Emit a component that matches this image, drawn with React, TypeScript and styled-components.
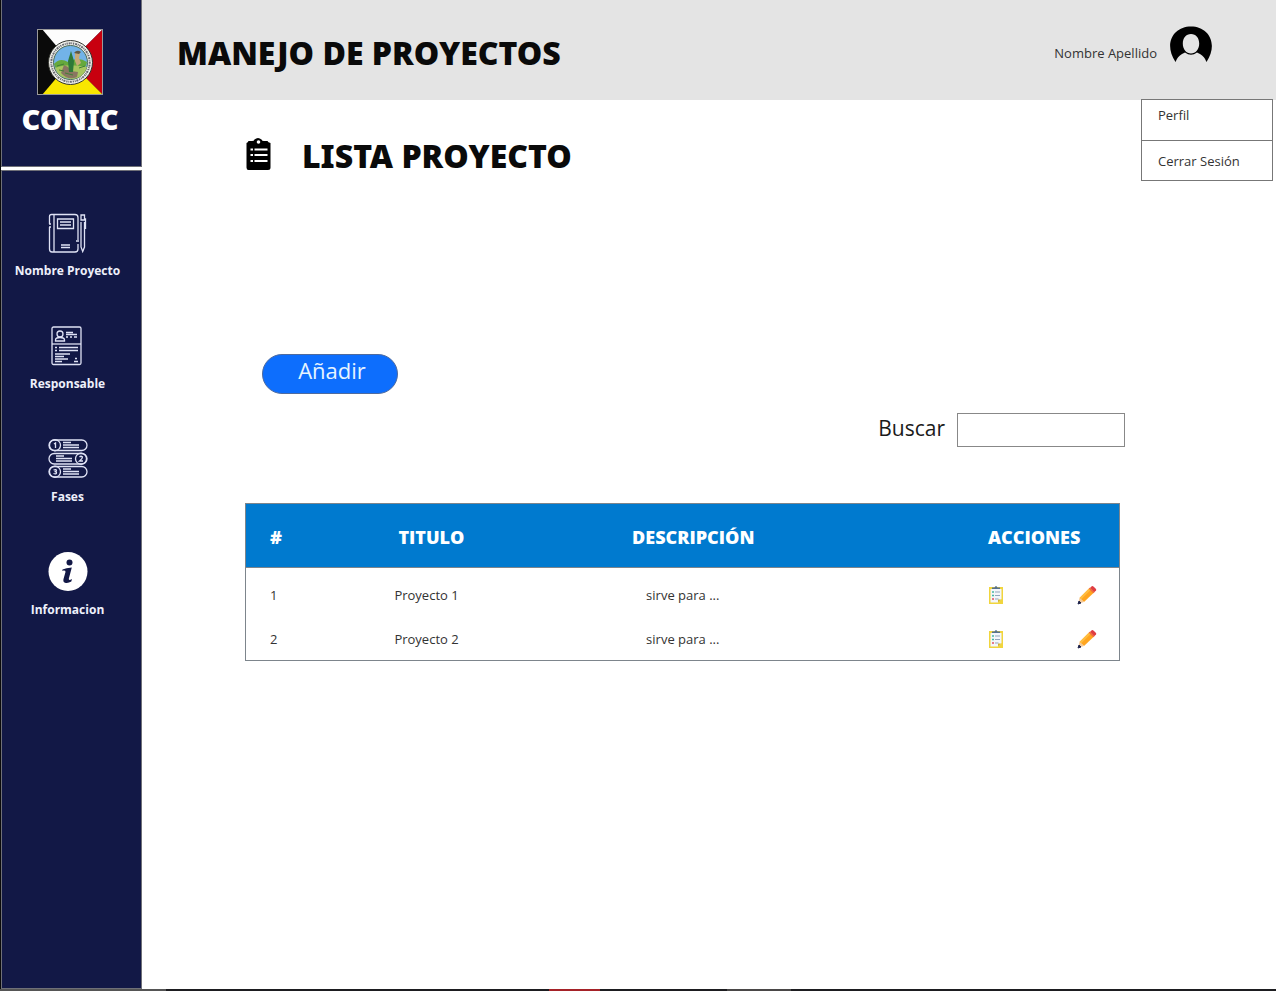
import React from "react";
import styled, { createGlobalStyle } from "styled-components";

const GlobalStyle = createGlobalStyle`
  *, *::before, *::after { box-sizing: border-box; }
  body {
    margin: 0;
    background: #fff;
    color: #333;
    font-family: "Open Sans", "Noto Sans", sans-serif;
    font-size: 13px;
    line-height: 18px;
  }
  h1, h2, p, ul { margin: 0; padding: 0; }
  a { color: inherit; text-decoration: none; }
`;

const displayFont = `"Noto Sans", "Open Sans", sans-serif`;

const Page = styled.div`
  display: grid;
  grid-template-columns: 142px 1fr;
  grid-template-rows: 1fr 2px;
  min-height: 100vh;
`;

const Sidebar = styled.aside`
  display: flex;
  flex-direction: column;
  gap: 3px;
  border-left: 1px solid #0a0a0a;
`;

const SidePanel = styled.div`
  background: #121846;
  border: 1px solid #6f7078;
`;

const Brand = styled(SidePanel)`
  display: flex;
  flex-direction: column;
  align-items: center;
  gap: 8px;
  height: 167px;
  padding: 29px 3px 0 0;
  border-top: 0;
`;

const BrandName = styled.p`
  color: #fff;
  font-family: ${displayFont};
  font-size: 29px;
  font-weight: 900;
  line-height: 32px;
`;

const NavPanel = styled(SidePanel)`
  flex: 1;
  padding: 42px 8px 40px 0;
`;

const NavList = styled.ul`
  display: flex;
  flex-direction: column;
  gap: 46px;
  list-style: none;
`;

const NavLink = styled.a`
  display: flex;
  flex-direction: column;
  align-items: center;
  gap: 9px;
  color: #eef0fb;
  font-size: 12px;
  font-weight: 700;
  white-space: nowrap;
`;

const Content = styled.div`
  display: flex;
  flex-direction: column;
  min-width: 0;
`;

const Header = styled.header`
  position: relative;
  display: flex;
  justify-content: space-between;
  height: 100px;
  padding: 26px 64px 0 35px;
  background: #e4e4e4;
`;

const Title = styled.h1`
  color: #0a0a0a;
  font-family: ${displayFont};
  font-size: 32px;
  font-weight: 900;
  line-height: 54px;
`;

const Subtitle = styled.h2`
  color: #0a0a0a;
  font-family: ${displayFont};
  font-size: 32px;
  font-weight: 900;
  line-height: 36px;
`;

const User = styled.div`
  display: flex;
  gap: 13px;
  height: 54px;
  line-height: 54px;
`;

const UserMenu = styled.nav`
  position: absolute;
  top: 99px;
  right: 3px;
  width: 132px;
  background: #fff;
  border: 1px solid #777;
`;

const MenuLink = styled.a`
  display: block;
  height: 40px;
  padding: 6px 16px;
  & + & {
    padding-top: 11px;
    border-top: 1px solid #777;
  }
`;

const Main = styled.main`
  display: flex;
  flex-direction: column;
  align-items: flex-start;
  padding: 38px 151px 60px 103px;
`;

const Heading = styled.div`
  display: flex;
  gap: 30px;
`;

const AddButton = styled.button`
  width: 136px;
  height: 40px;
  margin: 180px 0 0 17px;
  padding: 0 0 8px 4px;
  border: 1px solid #4f6b9e;
  border-radius: 20px;
  background: #0d6efd;
  color: #e6f4ff;
  font: inherit;
  font-size: 22px;
  line-height: 30px;
`;

const Search = styled.div`
  display: flex;
  align-self: flex-end;
  gap: 12px;
  margin-top: 19px;
`;

const SearchLabel = styled.label`
  color: #1a1a1a;
  font-size: 21px;
  line-height: 30px;
`;

const SearchInput = styled.input`
  width: 168px;
  height: 34px;
  padding: 0 8px;
  border: 1px solid #888;
  background: #fff;
  font: inherit;
`;

const TableFrame = styled.div`
  align-self: stretch;
  margin: 56px 5px 0 0;
  border: 1px solid #7d858c;
`;

const Table = styled.table`
  width: 100%;
  table-layout: fixed;
  border-collapse: collapse;
  text-align: left;
`;

const HeadCell = styled.th<{ $width: string; $indent: number }>`
  width: ${(p) => p.$width};
  height: 63px;
  padding: 4px 0 0 ${(p) => p.$indent}px;
  background: #007acf;
  color: #fff;
  font-size: 18px;
  font-weight: 800;
  line-height: 24px;
`;

const TableBody = styled.tbody`
  border-top: 1px solid #7d858c;
`;

const Row = styled.tr`
  height: 43px;
  &:first-child { height: 50px; }
  &:first-child > td { padding-top: 6px; }
`;

const Cell = styled.td<{ $indent: number }>`
  padding: 0 0 0 ${(p) => p.$indent}px;
`;

const Actions = styled.div`
  display: flex;
  justify-content: space-between;
  padding-right: 22px;
`;

const IconButton = styled.button`
  display: flex;
  padding: 0;
  border: 0;
  background: none;
`;

const BottomStrip = styled.footer`
  grid-column: 1 / -1;
  background: linear-gradient(
    90deg,
    #555 0 13%,
    #1d1d20 13% 43%,
    #a52228 43% 47%,
    #1d1d20 47% 57%,
    #4a4848 57% 62%,
    #1d1d20 62%
  );
`;

const Logo = () => (
  <svg width="66" height="66" viewBox="0 0 66 66" role="img" aria-label="CONIC">
    <path d="M0 0H66L33 33Z" fill="#fdfdfd" />
    <path d="M66 0V66L33 33Z" fill="#c8000f" />
    <path d="M0 66H66L33 33Z" fill="#f8e600" />
    <path d="M0 0L5 0L33 33L5 66H0Z" fill="#0a0a0a" />
    <rect x=".5" y=".5" width="65" height="65" fill="none" stroke="#9a9a9a" />
    <circle cx="33.5" cy="33.5" r="22" fill="#f1f1ec" stroke="#33352f" />
    <circle cx="33.5" cy="33.5" r="19.2" fill="none" stroke="#6a6c73" strokeWidth="2" strokeDasharray="1.3 .9 2 .7 .9 .8" />
    <circle cx="33.5" cy="33.5" r="17" fill="#72b3e8" stroke="#4b6a53" />
    <path d="M17 35Q23 28 31 33Q41 27 50 33A17 17 0 0 1 17 35Z" fill="#66a93c" />
    <path d="M18 39Q29 34 50 38Q46 50 34 50Q22 50 18 39Z" fill="#a7c65f" />
    <path d="M24 44L27 36L31 38L34 42L41 43L40 48Q31 52 24 44Z" fill="#8a7661" />
    <path d="M34 22L37 32L36 43H32L31 32Z" fill="#2e7a38" />
    <path d="M38 24L41 22L43 25L42 29L44 34L40 37L38 32Z" fill="#c6aa78" />
    <path d="M37 24Q40 20 44 23L42 25Z" fill="#5e5944" />
    <path d="M20 37l7-2M42 39l6-2M28 44l8 2M22 41l5 1" stroke="#417f36" fill="none" />
  </svg>
);

const NotebookIcon = () => (
  <svg width="40" height="40" viewBox="0 0 40 40" fill="none" stroke="#dfe2f5" strokeWidth="1.3" aria-hidden="true">
    <path d="M1.500 11V3.500Q1.500 1.500 3.500 1.500H27Q30 1.500 30 4.500V27M1.500 14V36Q1.500 39 4 39H27Q30 39 30 36V31M6 1.500V39" />
    <path d="M1 11h2M1 14h2M28 28h3" />
    <path d="M9.500 6H25.500V15.500H9.500ZM12 9H23M12 12H23M13 32H22M13 34.500H22" />
    <path d="M33 2H36.500V7H33ZM33 9V34L34.700 38.500L36.500 34V9M36 6H37.500V16" />
  </svg>
);

const ProfileIcon = () => (
  <svg width="40" height="40" viewBox="0 0 40 40" fill="none" stroke="#dfe2f5" strokeWidth="1.3" aria-hidden="true">
    <rect x="4" y="1" width="29" height="37.500" rx="1.500" />
    <path d="M4 18H33" />
    <circle cx="12" cy="8" r="3" />
    <path d="M7.500 15V14Q7.500 11.500 12 11.500Q16.500 11.500 16.500 14V15Z" />
    <path d="M18 6.500H25M18 8.500H29M18 11H20M22 11H24M26 11H29M7 21.500H9M11 21.500H30M7 24.500H9M11 24.500H30M7 28H22M7 30.500H16M7 33H20M7 35.500H14M27 32.500H29M26 35.500H30" />
  </svg>
);

const PhasesIcon = () => (
  <svg width="40" height="40" viewBox="0 0 40 40" fill="none" stroke="#dfe2f5" strokeWidth="1.3" aria-hidden="true">
    <rect x="1" y="1" width="38" height="10.500" rx="5.250" />
    <rect x="1" y="14.500" width="38" height="10.500" rx="5.250" />
    <rect x="1" y="27.500" width="38" height="10.500" rx="5.250" />
    <circle cx="7" cy="6.250" r="5.500" />
    <circle cx="33" cy="19.750" r="5.500" />
    <circle cx="7" cy="32.750" r="5.500" />
    <path d="M15 3.500H23M15 6H31M15 8.500H31M8 17H16M8 19.500H24M8 22H24M15 30H23M15 32.500H31M15 35H31" />
    <path d="M6 5L7.500 4V9M31.500 18Q33 16.500 34.500 18Q34.500 19.500 31.500 22H35M5.500 31Q8.500 30 8.500 31.500Q8.500 32.500 6.500 32.500Q8.700 32.500 8.500 34Q8 35.500 5.500 34.500" />
  </svg>
);

const InfoIcon = () => (
  <svg width="40" height="40" viewBox="0 0 40 40" aria-hidden="true">
    <circle cx="20" cy="19.500" r="19.500" fill="#fff" />
    <circle cx="21.500" cy="10.500" r="3" fill="#121846" />
    <path d="M14.500 17.500Q18 16 23.800 15.500L20.800 26.800Q20.500 29 24 27L23.300 29.500Q20 31.500 17 30.700Q14.800 30 15.500 27L17.500 20Q17.800 18 14.200 18.800Z" fill="#121846" />
  </svg>
);

const AvatarIcon = () => (
  <svg width="42" height="37" viewBox="0 0 42 37" aria-hidden="true">
    <path fillRule="evenodd" d="M5.500 36C-7 17 4 .5 21 .5S49 17 36.500 36Q34.500 30.500 30 28L27 26.500Q21 31 15 26.500L12 28Q7.500 30.500 5.500 36ZM21 8C16 8 12.800 12 12.800 17.500C12.800 23.500 16.500 27.500 21 27.500C25.500 27.500 29.200 23.500 29.200 17.500C29.200 12 26 8 21 8Z" />
  </svg>
);

const ListIcon = () => (
  <svg width="27" height="34" viewBox="0 0 27 34" aria-hidden="true">
    <path d="M3.500 3H7Q9 3 9.500 1.500Q13 -1.500 16.500 1.500Q17 3 19 3H22.500Q23 4.500 25.500 5V29.500Q25.500 32 23 32H3.500Q1.500 32 1.500 29.500V5Q3 4.500 3.500 3Z" />
    <circle cx="13.500" cy="4" r="1.800" fill="#fff" />
    <path d="M5.500 11.500H8M9.500 11.500H22.500M5.500 17H8M9.500 17H22.500M5.500 23H8M9.500 23H22.500" stroke="#fff" strokeWidth="2" />
  </svg>
);

const ClipboardIcon = () => (
  <svg width="16" height="20" viewBox="0 0 16 20" aria-hidden="true">
    <path d="M1 2H15V19H1Z" fill="#f1d53d" />
    <path d="M2.500 4H13.500V14L10 17.500H2.500Z" fill="#f4f6fa" />
    <path d="M10 17.500V14.500H13Z" fill="#d2b42d" />
    <path d="M4 4V2.500H6.500Q8 -.5 9.500 2.500H12V4Z" fill="#57718d" />
    <path d="M7 7H12M7 10.500H12M7 14H10.500" stroke="#93a5bd" />
    <path d="M4 7H6M4 10.500H6" stroke="#44b6a4" strokeWidth="1.300" />
    <path d="M4 14H6" stroke="#e05262" strokeWidth="1.600" />
  </svg>
);

const PencilIcon = () => (
  <svg width="20" height="20" viewBox="0 0 20 20" aria-hidden="true">
    <path d="M12.500 3L17 7.500L7 17L2.500 13Z" fill="#ffa51f" />
    <path d="M12.500 3L14 4.500L4 14.500L2.500 13Z" fill="#ffbd40" />
    <path d="M2.500 13L7 17L1 19Z" fill="#f3c99a" />
    <path d="M2 16L4 18L1 19Z" fill="#20264e" stroke="#20264e" />
    <path d="M13 3L15 1Q16 .5 19 4Q19.500 5 19 5.500L17 7.500Z" fill="#df3d43" />
    <path d="M11.800 3.800L13 2.500L17.500 7L16.200 8.200Z" fill="#f06b3e" />
  </svg>
);

const navItems = [
  { label: "Nombre Proyecto", icon: <NotebookIcon /> },
  { label: "Responsable", icon: <ProfileIcon /> },
  { label: "Fases", icon: <PhasesIcon /> },
  { label: "Informacion", icon: <InfoIcon /> },
];

const projects = [
  { id: 1, title: "Proyecto 1", description: "sirve para ..." },
  { id: 2, title: "Proyecto 2", description: "sirve para ..." },
];

export default function App() {
  return (
    <>
      <GlobalStyle />
      <Page>
        <Sidebar>
          <Brand>
            <Logo />
            <BrandName>CONIC</BrandName>
          </Brand>
          <NavPanel as="nav">
            <NavList>
              {navItems.map((item) => (
                <li key={item.label}>
                  <NavLink href="#">
                    {item.icon}
                    <span>{item.label}</span>
                  </NavLink>
                </li>
              ))}
            </NavList>
          </NavPanel>
        </Sidebar>
        <Content>
          <Header>
            <Title>MANEJO DE PROYECTOS</Title>
            <User>
              <span>Nombre Apellido</span>
              <AvatarIcon />
            </User>
            <UserMenu>
              <MenuLink href="#">Perfil</MenuLink>
              <MenuLink href="#">Cerrar Sesión</MenuLink>
            </UserMenu>
          </Header>
          <Main>
            <Heading>
              <ListIcon />
              <Subtitle>LISTA PROYECTO</Subtitle>
            </Heading>
            <AddButton type="button">Añadir</AddButton>
            <Search>
              <SearchLabel htmlFor="buscar">Buscar</SearchLabel>
              <SearchInput id="buscar" type="text" />
            </Search>
            <TableFrame>
              <Table>
                <thead>
                  <tr>
                    <HeadCell $width="17%" $indent={24}>#</HeadCell>
                    <HeadCell $width="27%" $indent={4}>TITULO</HeadCell>
                    <HeadCell $width="41%" $indent={2}>DESCRIPCIÓN</HeadCell>
                    <HeadCell $width="15%" $indent={0}>ACCIONES</HeadCell>
                  </tr>
                </thead>
                <TableBody>
                  {projects.map((project) => (
                    <Row key={project.id}>
                      <Cell $indent={24}>{project.id}</Cell>
                      <Cell $indent={0}>{project.title}</Cell>
                      <Cell $indent={16}>{project.description}</Cell>
                      <Cell $indent={0}>
                        <Actions>
                          <IconButton type="button" aria-label="Ver detalle">
                            <ClipboardIcon />
                          </IconButton>
                          <IconButton type="button" aria-label="Editar">
                            <PencilIcon />
                          </IconButton>
                        </Actions>
                      </Cell>
                    </Row>
                  ))}
                </TableBody>
              </Table>
            </TableFrame>
          </Main>
        </Content>
        <BottomStrip />
      </Page>
    </>
  );
}
